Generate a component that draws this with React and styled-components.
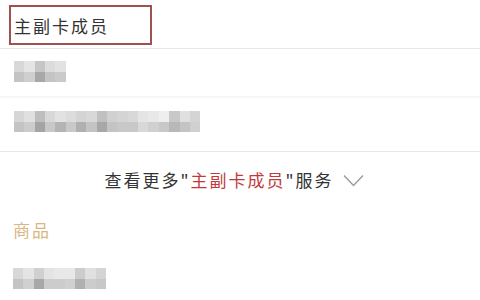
import styled, { createGlobalStyle } from "styled-components";

const GlobalStyle = createGlobalStyle`
  html, body {
    margin: 0;
    padding: 0;
    background: #ffffff;
  }
  body {
    font-family: "Noto Sans CJK SC", "Noto Sans", sans-serif;
    color: #333333;
  }
`;

const mosaics = {
  member: [
    ["#d8d8d8", "#e4e4e4", "#c6c6c6", "#dcdcdc", "#e2e2e2"],
    ["#c4c4c4", "#cfcfcf", "#a8a8a8", "#c4c4c4", "#cacaca"],
  ],
  number: [
    ["#d6d6d6", "#e0e0e0", "#bebebe", "#d8d8d8", "#e2e2e2", "#dcdcdc", "#d4d4d4", "#d8d8d8", "#c0c0c0", "#d0d0d0", "#d4d4d4", "#d8d8d8", "#e4e4e4", "#e8e8e8", "#eeeeee", "#c8c8c8", "#e0e0e0", "#d4d4d4"],
    ["#c4c4c4", "#cccccc", "#a4a4a4", "#c8c8c8", "#b4b4b4", "#c8c8c8", "#b0b0b0", "#c4c4c4", "#a8a8a8", "#c4c4c4", "#c8c8c8", "#c8c8c8", "#d8d8d8", "#d0d0d0", "#c8c8c8", "#b8b8b8", "#c4c4c4", "#d0d0d0"],
  ],
  product: [
    ["#d8d8d8", "#e4e4e4", "#d0d0d0", "#e4e4e4", "#e8e8e8", "#e8e8e8", "#cccccc", "#e0e0e0", "#d4d4d4"],
    ["#c4c4c4", "#d0d0d0", "#a8a8a8", "#cccccc", "#cccccc", "#d0d0d0", "#b0b0b0", "#cccccc", "#c8c8c8"],
  ],
};

const Page = styled.div`
  width: 480px;
  height: 300px;
  overflow: hidden;
  display: flex;
  flex-direction: column;
`;

const HeaderRow = styled.div`
  height: 49px;
  padding: 5px 0 0 9px;
  box-sizing: border-box;
  border-bottom: 1px solid #e8e8e8;
`;

const TitleBox = styled.div`
  width: 143px;
  height: 40px;
  box-sizing: border-box;
  border: 2px solid #a0504f;
  padding-left: 3px;
  display: flex;
  align-items: center;
  font-size: 17px;
  letter-spacing: 2px;
  color: #333333;
`;

const Row = styled.div`
  height: ${(p) => p.$height}px;
  box-sizing: border-box;
  padding: ${(p) => p.$top}px 0 0 14px;
  border-bottom: ${(p) => p.$line};
`;

const Mosaic = styled.div`
  display: grid;
  grid-template-columns: repeat(${(p) => p.$cols}, 10.35px);
  grid-auto-rows: 10.5px;
  filter: blur(0.4px);
`;

const Cell = styled.div`
  background: ${(p) => p.$shade};
`;

const MoreRow = styled.div`
  height: 54px;
  display: flex;
  align-items: center;
  justify-content: center;
  gap: 9px;
  padding-right: 12px;
  font-size: 17px;
  letter-spacing: 2px;
  color: #333333;
`;

const Highlight = styled.span`
  color: #c2393c;
`;

const Chevron = styled.svg`
  width: 21px;
  height: 13px;
  margin-top: 2px;
`;

const SectionLabel = styled.div`
  padding: 12px 0 0 13px;
  height: 24px;
  line-height: 24px;
  font-size: 17px;
  letter-spacing: 2px;
  color: #dab682;
`;

const ProductRow = styled.div`
  padding: 26px 0 0 13px;
`;

function Blur({ grid }) {
  return (
    <Mosaic $cols={grid[0].length}>
      {grid.flat().map((shade, i) => (
        <Cell key={i} $shade={shade} />
      ))}
    </Mosaic>
  );
}

export default function App() {
  return (
    <>
      <GlobalStyle />
      <Page>
        <HeaderRow>
          <TitleBox>主副卡成员</TitleBox>
        </HeaderRow>
        <Row $height={49} $top={12} $line="2px solid #f6f6f6">
          <Blur grid={mosaics.member} />
        </Row>
        <Row $height={54} $top={13} $line="1px solid #e8e8e8">
          <Blur grid={mosaics.number} />
        </Row>
        <MoreRow>
          <span>
            查看更多"<Highlight>主副卡成员</Highlight>"服务
          </span>
          <Chevron viewBox="0 0 21 13" fill="none">
            <path d="M1 1.5 L10.5 11.5 L20 1.5" stroke="#9a9a9a" strokeWidth="1.4" />
          </Chevron>
        </MoreRow>
        <SectionLabel>商品</SectionLabel>
        <ProductRow>
          <Blur grid={mosaics.product} />
        </ProductRow>
      </Page>
    </>
  );
}
